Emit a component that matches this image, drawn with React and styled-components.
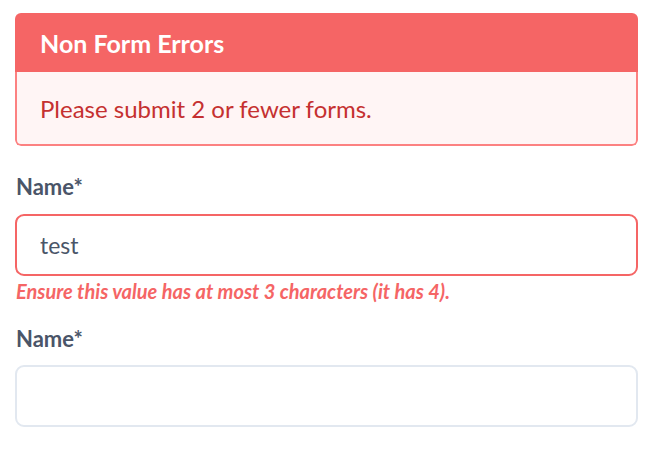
import React from 'react';
import styled, { createGlobalStyle } from 'styled-components';

const GlobalStyle = createGlobalStyle`
  body {
    margin: 0;
    background: #ffffff;
    font-family: Lato, "Open Sans", sans-serif;
  }
`;

const Page = styled.div`
  width: 623px;
  padding: 13px 0 0 15px;
`;

const ErrorCard = styled.div`
  border-radius: 6px;
  overflow: hidden;
`;

const ErrorHeader = styled.div`
  height: 59px;
  display: flex;
  align-items: center;
  padding: 0 25px;
  background: #f56565;
  color: #ffffff;
  font-size: 25px;
  font-weight: 700;
`;

const ErrorBody = styled.div`
  box-sizing: border-box;
  height: 74px;
  display: flex;
  align-items: center;
  padding: 1px 23px 0;
  background: #fff5f5;
  border: 2px solid #fc8181;
  border-top: 0;
  border-radius: 0 0 6px 6px;
  color: #c53030;
  font-size: 24px;
`;

const Field = styled.div`
  margin-top: ${(p) => p.$top}px;
`;

const Label = styled.label`
  display: block;
  line-height: 24px;
  font-size: 22px;
  font-weight: 700;
  color: #4a5568;
  margin-left: 1px;
`;

const Input = styled.input`
  box-sizing: border-box;
  display: block;
  width: 100%;
  height: 62px;
  margin-top: ${(p) => p.$gap}px;
  padding: 0 23px;
  border: 2px solid ${(p) => (p.$invalid ? '#f56565' : '#e2e8f0')};
  border-radius: 9px;
  background: #ffffff;
  font-family: inherit;
  font-size: 23px;
  color: #4a5568;
  outline: none;
`;

const FieldError = styled.p`
  margin: 5px 0 0 1px;
  line-height: 20px;
  font-size: 20px;
  font-weight: 700;
  font-style: italic;
  color: #f56565;
`;

export default function App() {
  return (
    <>
      <GlobalStyle />
      <Page>
        <ErrorCard>
          <ErrorHeader>Non Form Errors</ErrorHeader>
          <ErrorBody>Please submit 2 or fewer forms.</ErrorBody>
        </ErrorCard>
        <Field $top={29}>
          <Label>Name*</Label>
          <Input $gap={15} $invalid defaultValue="test" />
          <FieldError>Ensure this value has at most 3 characters (it has 4).</FieldError>
        </Field>
        <Field $top={26}>
          <Label>Name*</Label>
          <Input $gap={14} />
        </Field>
      </Page>
    </>
  );
}
